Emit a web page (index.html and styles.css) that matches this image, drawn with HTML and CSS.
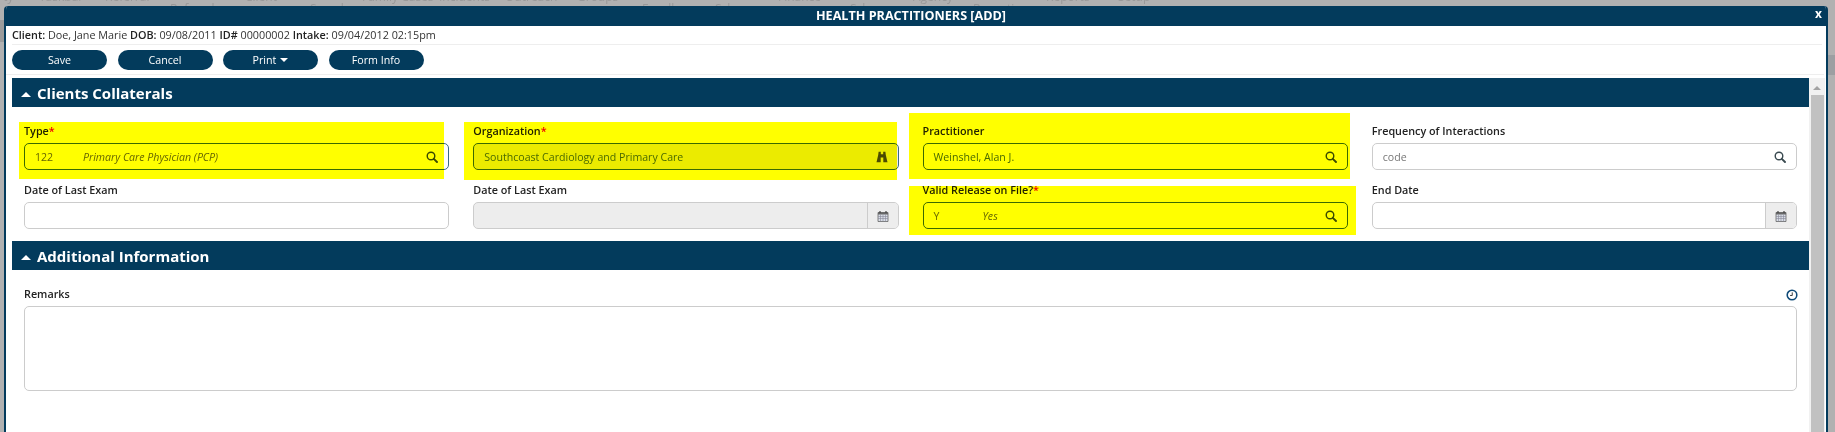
FILE: index.html
```html
<!DOCTYPE html>
<html lang="en">
<head>
<meta charset="utf-8">
<title>Health Practitioners [Add]</title>
<link rel="stylesheet" href="styles.css">
</head>
<body>
<svg class="defs" width="0" height="0" aria-hidden="true">
  <symbol id="i-search" viewBox="0 0 12 12"><circle cx="5" cy="5" r="3.8" fill="none" stroke="currentColor" stroke-width="1.4"/><path d="M7.800 7.800L11 11" fill="none" stroke="currentColor" stroke-width="1.900" stroke-linecap="round"/></symbol>
  <symbol id="i-cal" viewBox="0 0 12 12"><path d="M1 2.500h10v9H1z" fill="#d8dde6" stroke="#666" stroke-width=".8"/><path d="M1 2.200h10v2.400H1z" fill="#666"/><path d="M3 1v2M9 1v2" stroke="#444" stroke-width="1.200"/><path d="M1 6.500h10M1 8.500h10M3.500 4.500v7M6 4.500v7M8.500 4.500v7" stroke="#889" stroke-width=".6"/></symbol>
  <symbol id="i-bino" viewBox="0 0 12 12"><path d="M2.600 .8h2.200v2.400h2.400V.8h2.200l.4 3.200 1.700 7.200H7.300V6.400H4.700v4.800H.5l1.700-7.200z" fill="currentColor"/></symbol>
</svg>

<nav class="backnav">
  <span class="n0">Pty</span><span class="n1">Taskbar</span><span class="n2">Referral</span><span class="n3 low">Referrals</span><span class="n4">Client</span><span class="n5 low">Search</span><span class="n6">Family Cases</span><span class="n7">Incidents</span><span class="n8">Outreach</span><span class="n9">Groups</span><span class="n13 low">Enroll</span><span class="n14 low">Sch</span><span class="n10">Finance</span><span class="n15 low">Sch</span><span class="n16">Agency</span><span class="n17 low">Reception</span><span class="n11">Reports</span><span class="n12">Setup</span>
</nav>

<main class="modal">
  <header class="titlebar">
    <h1 class="title">HEALTH PRACTITIONERS [ADD]</h1>
    <span class="close">x</span>
  </header>
  <p class="client"><b>Client:</b> Doe, Jane Marie <b>DOB:</b> 09/08/2011 <b>ID#</b> 00000002 <b>Intake:</b> 09/04/2012 02:15pm</p>
  <div class="toolbar">
    <button class="btn">Save</button>
    <button class="btn">Cancel</button>
    <button class="btn">Print<i class="caret"></i></button>
    <button class="btn">Form Info</button>
  </div>
  <div class="scrollarea">
    <div class="content">
      <h2 class="section"><i class="tri"></i>Clients Collaterals</h2>
      <div class="grid">
        <div class="field"><label class="label">Type<em>*</em></label>
          <div class="input focus"><span class="code">122</span><span class="desc">Primary Care Physician (PCP)</span><svg class="ic"><use href="#i-search"/></svg></div></div>
        <div class="field"><label class="label">Organization<em>*</em></label>
          <div class="input ro"><span class="val">Southcoast Cardiology and Primary Care</span><svg class="ic"><use href="#i-bino"/></svg></div></div>
        <div class="field"><label class="label">Practitioner</label>
          <div class="input focus"><span class="val">Weinshel, Alan J.</span><svg class="ic"><use href="#i-search"/></svg></div></div>
        <div class="field"><label class="label">Frequency of Interactions</label>
          <div class="input"><span class="ph">code</span><svg class="ic"><use href="#i-search"/></svg></div></div>
        <div class="field"><label class="label">Date of Last Exam</label>
          <div class="input"></div></div>
        <div class="field"><label class="label">Date of Last Exam</label>
          <div class="input date dis"><span class="addon"><svg class="ic"><use href="#i-cal"/></svg></span></div></div>
        <div class="field"><label class="label">Valid Release on File?<em>*</em></label>
          <div class="input focus"><span class="code short">Y</span><span class="desc">Yes</span><svg class="ic"><use href="#i-search"/></svg></div></div>
        <div class="field"><label class="label">End Date</label>
          <div class="input date"><span class="addon"><svg class="ic"><use href="#i-cal"/></svg></span></div></div>
      </div>
      <h2 class="section"><i class="tri"></i>Additional Information</h2>
      <div class="remarks">
        <div class="remarks-head"><label class="label">Remarks</label>
          <svg class="clock" viewBox="0 0 10 10"><circle cx="5" cy="5" r="4" fill="#fff" stroke="#0f4a78" stroke-width="1.300"/><path d="M5.200 2.800V5.400H3.400" fill="none" stroke="#333" stroke-width=".8"/></svg>
        </div>
        <div class="textarea"></div>
      </div>
    </div>
    <div class="scrollbar"><i class="up"></i><div class="thumb"></div></div>
  </div>

  <div class="mark m1"></div>
  <div class="mark m2"></div>
  <div class="mark m3"></div>
  <div class="mark m4"></div>
</main>
</body>
</html>
```
FILE: styles.css
```css
* { box-sizing: border-box; }
html, body { margin: 0; height: 432px; overflow: hidden; }
body {
  font-family: "Open Sans", "Noto Sans", sans-serif;
  font-size: 11px;
  color: #222;
  background-color: #b1b1b1;
  background-image:
    linear-gradient(#9b9b9b, #9b9b9b),
    linear-gradient(#9c9fa2, #9c9fa2);
  background-size: 4px 22px, 7px 20px;
  background-position: 0 20px, 100% 55px;
  background-repeat: no-repeat;
}
.defs { position: absolute; }

.backnav { height: 6px; overflow: hidden; position: relative; color: #999; font-size: 12px; line-height: 16px; }
.backnav span { position: absolute; top: -11px; white-space: nowrap; }
.backnav .low { top: 1px; height: 5px; overflow: hidden; }
.n0 { left: -4px; } .n1 { left: 39px; } .n2 { left: 105px; } .n3 { left: 170px; } .n4 { left: 245px; }
.n5 { left: 310px; } .n6 { left: 362px; } .n7 { left: 439px; } .n8 { left: 505px; }
.n9 { left: 577px; } .n13 { left: 642px; } .n14 { left: 715px; } .n10 { left: 778px; }
.n15 { left: 850px; } .n16 { left: 913px; } .n17 { left: 973px; } .n11 { left: 1046px; } .n12 { left: 1118px; }

.modal {
  position: relative;
  height: 426px;
  margin: 0 7px 0 4px;
  background: #fff;
  border: solid #033b5c;
  border-width: 0 2px;
  border-radius: 4px 4px 0 0;
  overflow: hidden;
}
.titlebar { height: 20px; padding-right: 10px; background: #033b5c; color: #fff; display: flex; align-items: center; justify-content: center; position: relative; }
.title { margin: 0; font-size: 12.6px; font-weight: 700; line-height: 20px; }
.close { position: absolute; right: 4px; top: 0; font-size: 12px; font-weight: 700; line-height: 16px; }

.client { margin: 0 4px 0 6px; height: 19px; line-height: 17px; font-size: 10.8px; border-bottom: 1px solid #eee; color: #333; }
.client b { font-weight: 600; color: #222; }

.toolbar { display: flex; gap: 10.5px; height: 30px; padding: 5px 6px 0; margin-right: 2px; border-bottom: 1px solid #eee; }
.btn { width: 95px; height: 20px; padding: 0; border: 0; border-radius: 10px; background: #033b5c; color: #fff; font: 10.7px "Open Sans", "Noto Sans", sans-serif; }
.caret { display: inline-block; margin: 0 0 2px 4px; border: 4px solid transparent; border-top-color: #fff; border-bottom: 0; vertical-align: middle; }

.scrollarea { display: flex; padding: 3px 0 0 6px; height: 357px; }
.content { width: 1797px; flex: none; }

.section { margin: 0; height: 29px; padding: 1px 0 0 9px; background: #033b5c; color: #fff; font-size: 15px; font-weight: 700; line-height: 28px; display: flex; align-items: center; }
.tri { width: 0; height: 0; margin: 3px 6px 0 0; border: 5px solid transparent; border-top: 0; border-bottom-color: #fff; }

.grid { display: grid; grid-template-columns: repeat(4, 1fr); gap: 13px 24px; padding: 17px 12px 12px; }
.label { display: block; height: 19px; font-size: 10.8px; font-weight: 600; line-height: 14px; color: #222; }
.label em { color: #e00; font-style: normal; }

.input { height: 27px; display: flex; align-items: center; padding: 1px 10px 0; border: 1px solid #ccc; border-radius: 5px; background: #fff; font-size: 10.6px; color: #666; }
.input.focus { border-color: #3a6a85; }
.input.ro { border-color: #3a6a85; background: #ebebeb; }
.input.dis { background: #ededed; }
.code { width: 48px; flex: none; color: #666; }
.code.short { width: 49px; }
.desc { font-style: italic; color: #666; }
.val { color: #4a6a4a; }
.ph { color: #777; }
.ic { width: 12px; height: 12px; margin-left: auto; color: #3a4a50; flex: none; }
.ro .ic { color: #4a4a30; }
.input.date { padding: 0; }
.addon { margin-left: auto; width: 31px; height: 100%; display: flex; align-items: center; justify-content: center; background: #ededed; border-left: 1px solid #ccc; border-radius: 0 4px 4px 0; }
.addon .ic { margin: 0; }

.remarks { padding: 17px 12px 0; }
.remarks-head { height: 19px; display: flex; justify-content: space-between; }
.clock { width: 12px; height: 12px; margin: 2px -1px 0 0; }
.textarea { height: 85px; border: 1px solid #ccc; border-radius: 5px; background: #fff; }

.scrollbar { width: 16px; background: #f1f1f1; display: flex; flex-direction: column; align-items: center; }
.up { margin-top: 8px; border: 4px solid transparent; border-top: 0; border-bottom-color: #a3a3a3; width: 0; height: 0; }
.thumb { width: 13px; margin-top: 5px; flex: 1; background: #c1c1c1; }

.mark { position: absolute; background: #ffff00; mix-blend-mode: multiply; }
.m1 { left: 13px; top: 116px; width: 425px; height: 57px; }
.m2 { left: 458px; top: 116px; width: 433px; height: 58px; }
.m3 { left: 903px; top: 107px; width: 441px; height: 66px; }
.m4 { left: 903px; top: 180px; width: 447px; height: 49px; }
```
